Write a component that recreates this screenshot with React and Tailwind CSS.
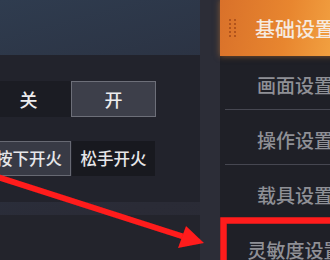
import React from "react";

const font = { fontFamily: '"Noto Sans CJK SC", "Noto Sans", sans-serif' };

function Tab({ label, active, line }) {
  if (active) {
    return (
      <div className="relative h-[56px] shrink-0 flex items-center justify-center bg-[linear-gradient(100deg,#d9712a_0%,#e8862f_45%,#f3a443_80%,#f7c25a_100%)] shadow-[0_0_6px_rgba(240,140,50,0.5)]">
        <div className="absolute left-[9px] top-[19px] grid grid-cols-2 gap-x-[3px] gap-y-[2px]">
          {Array.from({ length: 10 }).map((_, i) => (
            <div key={i} className="w-[2px] h-[2px] bg-[#b2541c]" />
          ))}
        </div>
        <span className="text-[20px] font-medium leading-none text-[#f6ebe0] pt-[1px]">{label}</span>
      </div>
    );
  }
  return (
    <div className="relative h-[55px] shrink-0 flex items-center justify-center">
      <span className="text-[19px] font-medium leading-none text-[#8f9096] pt-[1px]">{label}</span>
      {line && <div className="absolute left-[5px] right-0 bottom-[1px] h-px bg-[#464751]" />}
    </div>
  );
}

export default function App() {
  return (
    <div
      className="relative w-[330px] h-[260px] overflow-hidden flex bg-[linear-gradient(165deg,#2f3c4f_0%,#2b3242_35%,#2a2b36_70%,#292a33_100%)]"
      style={font}
    >
      {/* left column */}
      <div className="w-[200px] shrink-0 pt-[55px] flex flex-col gap-[13px]">
        <div className="h-[147px] shrink-0 bg-[#22232c] pt-[26px] flex flex-col gap-[24px] overflow-hidden">
          <div className="flex h-[36px] shrink-0">
            <div className="ml-[-14px] w-[85px] h-full bg-[#1b1c23] flex items-center justify-center text-[18px] font-medium text-[#ececee]">关</div>
            <div className="w-[85px] h-full bg-[#3d3f4a] border border-[#6d6f79] flex items-center justify-center text-[18px] font-medium text-[#ececee]">开</div>
          </div>
          <div className="flex h-[35px] shrink-0 gap-[1px]">
            <div className="ml-[-13px] w-[84px] h-full bg-[#383a45] border border-[#676973] flex items-center justify-center text-[16.5px] font-medium text-[#e6e6e9]">按下开火</div>
            <div className="w-[83px] h-full bg-[#18191f] flex items-center justify-center text-[16.5px] font-medium text-[#e6e6e9]">松手开火</div>
          </div>
        </div>
        <div className="flex-1 bg-[#23242c]" />
      </div>
      {/* gap */}
      <div className="w-[20px] shrink-0 bg-[#2c2d37]" />
      {/* sidebar */}
      <div className="w-[150px] shrink-0 flex flex-col bg-[#1f2027]">
        <Tab label="基础设置" active />
        <Tab label="画面设置" line />
        <Tab label="操作设置" line />
        <Tab label="载具设置" line />
        <Tab label="灵敏度设置" />
      </div>

      {/* annotations */}
      <svg className="absolute left-0 top-0 pointer-events-none" width="330" height="260" viewBox="0 0 330 260">
        <defs>
          <filter id="g" x="-10%" y="-10%" width="120%" height="120%">
            <feGaussianBlur stdDeviation="0.6" />
          </filter>
        </defs>
        <g filter="url(#g)">
          <line x1="-4" y1="176.5" x2="183" y2="236.5" stroke="#ff1a1a" strokeWidth="6" />
          <polygon points="204,243 178,248 186,226" fill="#ff1a1a" />
          <rect x="223.5" y="220.5" width="120" height="60" fill="none" stroke="#ff1a1a" strokeWidth="6.5" />
        </g>
      </svg>
    </div>
  );
}
